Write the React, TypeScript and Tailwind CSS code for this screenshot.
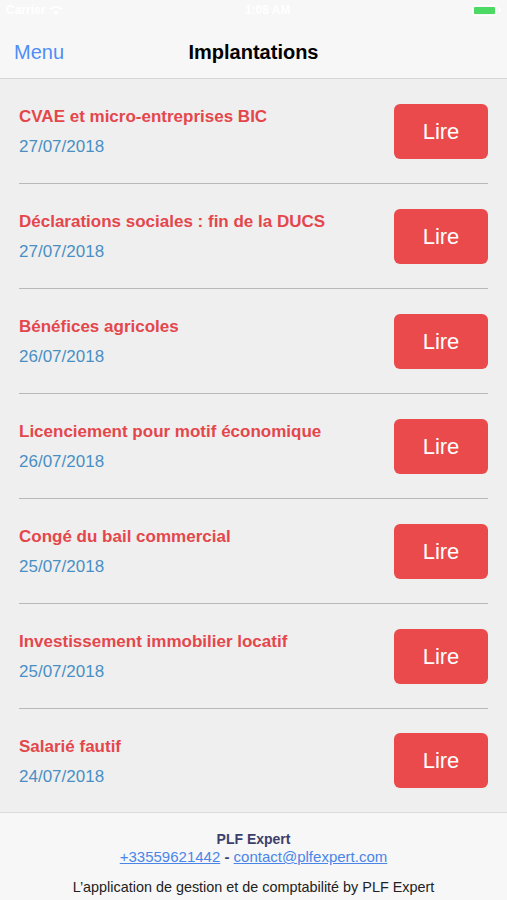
const items = [
  { title: "CVAE et micro-entreprises BIC", date: "27/07/2018" },
  { title: "Déclarations sociales : fin de la DUCS", date: "27/07/2018" },
  { title: "Bénéfices agricoles", date: "26/07/2018" },
  { title: "Licenciement pour motif économique", date: "26/07/2018" },
  { title: "Congé du bail commercial", date: "25/07/2018" },
  { title: "Investissement immobilier locatif", date: "25/07/2018" },
  { title: "Salarié fautif", date: "24/07/2018" },
];

const StatusBar = () => (
  <div className="h-5 flex items-center justify-between px-1.5 text-white text-[12px] font-semibold">
    <div className="flex items-center gap-1">
      <span>Carrier</span>
      <svg width="14" height="10" viewBox="0 0 14 10" fill="white">
        <path d="M7 10 L4.5 7 A3.5 3.5 0 0 1 9.5 7 Z M7 1 A9 9 0 0 1 13.5 3.5 L12 5 A7 7 0 0 0 2 5 L0.5 3.5 A9 9 0 0 1 7 1 Z" />
      </svg>
    </div>
    <span>1:08 AM</span>
    <div className="flex items-center gap-0.5">
      <div className="w-[25px] h-[11px] rounded-[3px] border border-white p-[1px]">
        <div className="w-full h-full bg-[#4cd964] rounded-[1px]" />
      </div>
      <div className="w-[2px] h-[4px] bg-white rounded-r-sm" />
    </div>
  </div>
);

const Row = ({ title, date, last }: { title: string; date: string; last: boolean }) => (
  <div className="px-[19px]">
    <div className={`flex items-center justify-between ${last ? "h-[103px]" : "h-[105px] border-b border-[#b9b9bc]"}`}>
      <div className="flex flex-col pt-[2px]">
        <span className="text-[17px] font-bold text-[#e4474b] leading-[22px]">{title}</span>
        <span className="text-[17px] text-[#4a8fc4] leading-[22px] mt-[8px]">{date}</span>
      </div>
      <button className="w-[94px] h-[55px] rounded-[6px] bg-[#ea4a4b] text-white text-[22px] flex items-center justify-center">
        Lire
      </button>
    </div>
  </div>
);

export default function App() {
  return (
    <div className="w-[507px] h-[900px] flex flex-col bg-[#efeff0] overflow-hidden" style={{ fontFamily: '"Liberation Sans", Arial, sans-serif' }}>
      <div className="bg-[#f7f7f7] border-b border-[#d6d6d8]">
        <StatusBar />
        <div className="h-[58px] pt-[6px] relative flex items-center justify-center">
          <span className="absolute left-[14px] text-[20px] text-[#4f8ef5]">Menu</span>
          <span className="text-[20px] font-bold text-black">Implantations</span>
        </div>
      </div>
      <div className="flex flex-col">
        {items.map((it, i) => (
          <Row key={i} title={it.title} date={it.date} last={i === items.length - 1} />
        ))}
      </div>
      <div className="flex-1 bg-[#f7f7f7] border-t border-[#dcdcde] flex flex-col items-center pt-[18px]">
        <span className="font-bold text-[14px] text-[#3d3f6b] leading-[17px]">PLF Expert</span>
        <div className="leading-[17px] text-[15px]">
          <span className="text-[#4a86e8] underline">+33559621442</span>
          <span className="text-[#3d3f6b] font-bold"> - </span>
          <span className="text-[#4a86e8] underline">contact@plfexpert.com</span>
        </div>
        <span className="mt-[12px] text-[14.4px] text-[#222]">L’application de gestion et de comptabilité by PLF Expert</span>
      </div>
    </div>
  );
}
